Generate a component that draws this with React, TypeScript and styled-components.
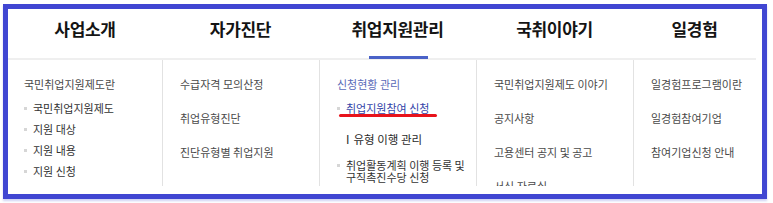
import React from "react";
import styled, { createGlobalStyle } from "styled-components";

const Global = createGlobalStyle`
  html, body { margin: 0; padding: 0; background: #ffffff; }
  body { font-family: "Noto Sans CJK KR", "Noto Sans", sans-serif; }
  * { box-sizing: border-box; }
`;

const Page = styled.div`
  width: 773px;
  height: 203px;
  padding: 4px 0 0 3px;
  background: #ffffff;
`;

const Frame = styled.div`
  width: 764px;
  height: 195px;
  border: 5px solid #4046d2;
  box-shadow: 0 2px 2px rgba(64, 70, 210, 0.25);
  overflow: hidden;
  background: #ffffff;
`;

const Header = styled.div`
  display: flex;
  width: 748px;
  height: 51px;
  border-bottom: 2px solid #efefef;
`;

const Tab = styled.div<{ $w: number; $active?: boolean }>`
  position: relative;
  flex: 0 0 ${(p) => p.$w}px;
  text-align: center;
  padding-top: 9px;
  font-size: 17px;
  line-height: 22px;
  font-weight: 700;
  color: #141414;
  letter-spacing: -0.3px;
  &::after {
    content: "";
    display: ${(p) => (p.$active ? "block" : "none")};
    position: absolute;
    left: 50%;
    bottom: -1px;
    width: 59px;
    height: 3px;
    margin-left: -29px;
    background: #4a62c8;
  }
`;

const Panel = styled.div`
  display: flex;
  height: 126px;
  overflow: hidden;
`;

const Column = styled.div<{ $w: number; $first?: boolean }>`
  flex: 0 0 ${(p) => p.$w}px;
  padding: 16px 0 0 ${(p) => (p.$first ? 16 : 17)}px;
  border-left: ${(p) => (p.$first ? "none" : "1px solid #e2e2e2")};
`;

const Link = styled.div<{ $gap?: number; $tone?: "blue" }>`
  margin-top: ${(p) => p.$gap ?? 0}px;
  font-size: 11px;
  line-height: 17px;
  color: ${(p) => (p.$tone === "blue" ? "#5a6ab8" : "#4a4a4a")};
  white-space: nowrap;
`;

const Sub = styled.div<{ $gap?: number; $active?: boolean; $wrap?: boolean }>`
  position: relative;
  margin-top: ${(p) => p.$gap ?? 0}px;
  padding-left: 9px;
  font-size: 11px;
  line-height: ${(p) => (p.$wrap ? "12px" : "17px")};
  color: ${(p) => (p.$active ? "#3444a8" : "#333333")};
  white-space: nowrap;
  &::before {
    content: "";
    position: absolute;
    left: 0;
    top: ${(p) => (p.$wrap ? "5px" : "7px")};
    width: 3px;
    height: 3px;
    background: #d6d6d6;
  }
`;

const Group = styled.div<{ $gap?: number }>`
  margin-top: ${(p) => p.$gap ?? 0}px;
  padding-left: 5px;
  font-size: 11.5px;
  line-height: 17px;
  color: #2a2a2a;
  white-space: nowrap;
`;

const Mark = styled.span`
  position: absolute;
  left: 2px;
  top: 14px;
  width: 98px;
  height: 2.5px;
  border-radius: 2px;
  background: #e8131b;
`;

const tabs = [
  { label: "사업소개", w: 154 },
  { label: "자가진단", w: 157 },
  { label: "취업지원관리", w: 157, active: true },
  { label: "국취이야기", w: 157 },
  { label: "일경험", w: 123 },
];

export default function App() {
  return (
    <>
      <Global />
      <Page>
        <Frame>
          <Header>
            {tabs.map((t) => (
              <Tab key={t.label} $w={t.w} $active={t.active}>
                {t.label}
              </Tab>
            ))}
          </Header>
          <Panel>
            <Column $w={154} $first>
              <Link>국민취업지원제도란</Link>
              <Sub $gap={7}>국민취업지원제도</Sub>
              <Sub $gap={4}>지원 대상</Sub>
              <Sub $gap={4}>지원 내용</Sub>
              <Sub $gap={4}>지원 신청</Sub>
            </Column>
            <Column $w={157}>
              <Link>수급자격 모의산정</Link>
              <Link $gap={17}>취업유형진단</Link>
              <Link $gap={17}>진단유형별 취업지원</Link>
            </Column>
            <Column $w={157}>
              <Link $tone="blue">신청현황 관리</Link>
              <Sub $gap={7} $active>
                취업지원참여 신청
                <Mark />
              </Sub>
              <Group $gap={14}>Ⅰ유형 이행 관리</Group>
              <Sub $gap={11} $wrap>
                취업활동계획 이행 등록 및
                <br />
                구직촉진수당 신청
              </Sub>
            </Column>
            <Column $w={157}>
              <Link>국민취업지원제도 이야기</Link>
              <Link $gap={17}>공지사항</Link>
              <Link $gap={17}>고용센터 공지 및 공고</Link>
              <Link $gap={17}>서식 자료실</Link>
            </Column>
            <Column $w={157}>
              <Link>일경험프로그램이란</Link>
              <Link $gap={17}>일경험참여기업</Link>
              <Link $gap={17}>참여기업신청 안내</Link>
            </Column>
          </Panel>
        </Frame>
      </Page>
    </>
  );
}
